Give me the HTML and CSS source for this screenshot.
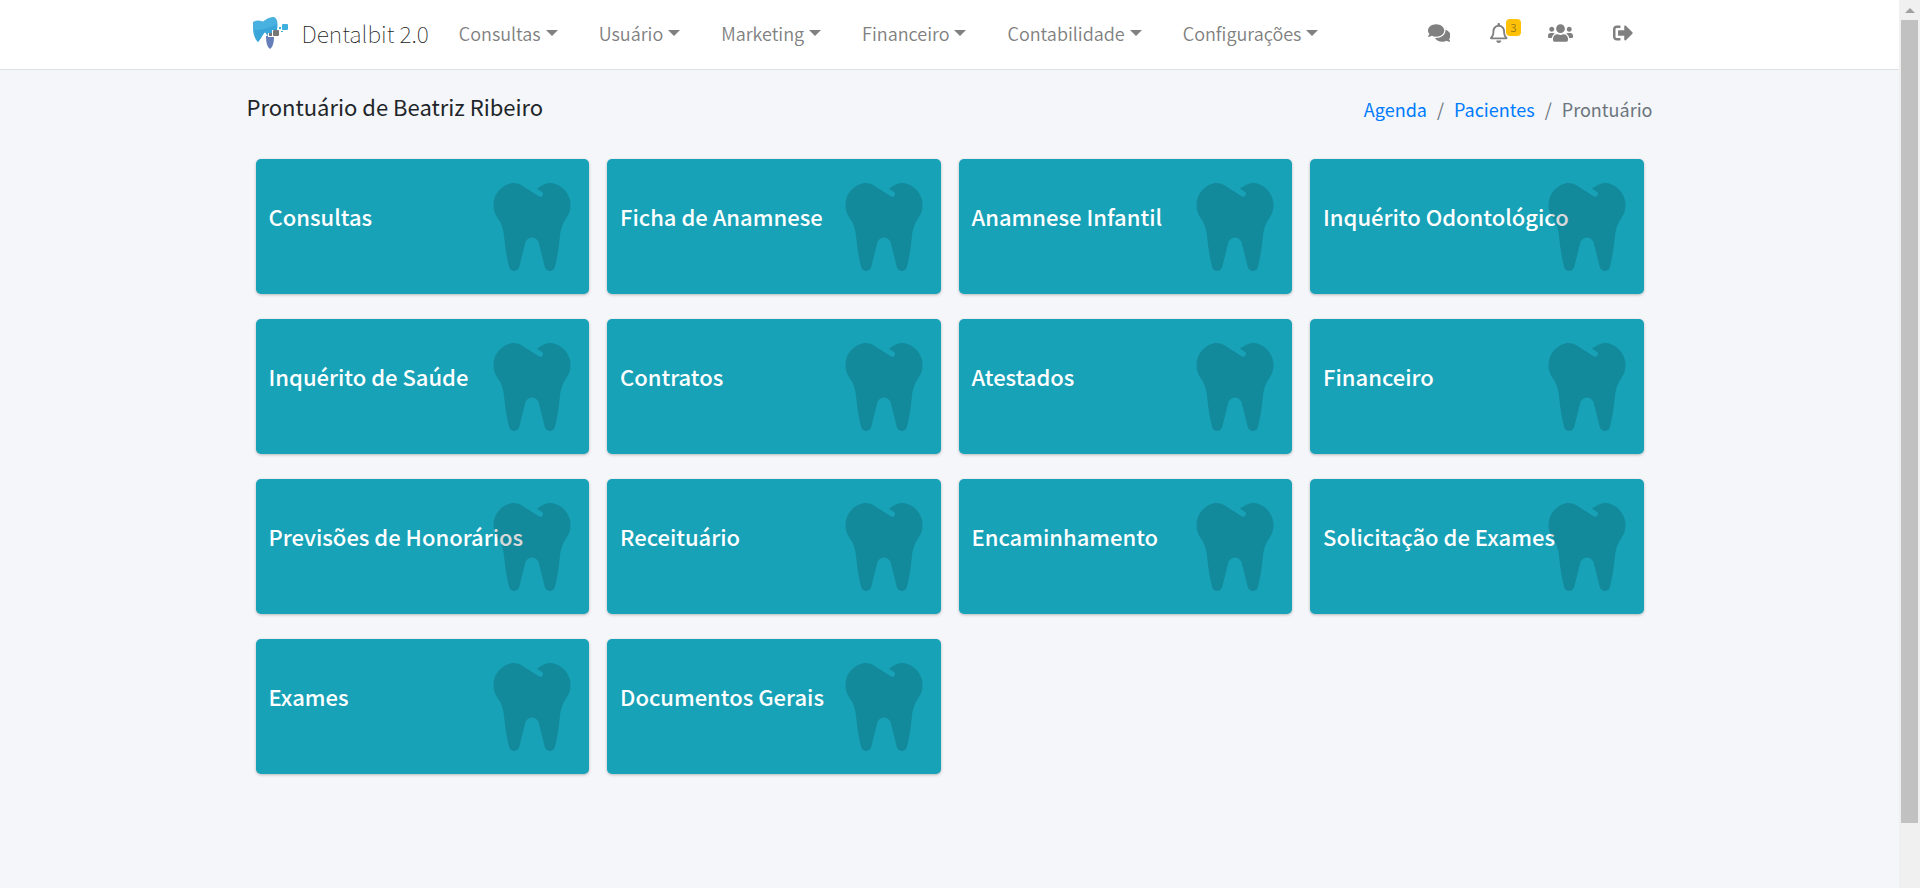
FILE: index.html
```html
<!DOCTYPE html>
<html lang="pt-BR">
<head>
<meta charset="utf-8">
<title>Dentalbit 2.0</title>
<link rel="stylesheet" href="styles.css">
</head>
<body>
<svg class="sprite" aria-hidden="true">
  <symbol id="tooth" viewBox="0 0 448 512"><path d="M443.98 96.25c-11.01-45.22-47.11-82.06-92.01-93.72-32.19-8.36-63 5.1-89.14 24.33-3.25 2.39-6.96 3.73-10.5 5.48l28.32 18.21c7.42 4.77 9.58 14.67 4.8 22.11-4.46 6.95-14.27 9.86-22.11 4.8L162.83 12.84c-20.7-10.85-43.38-16.4-66.81-10.31-44.9 11.67-81 48.5-92.01 93.72-10.13 41.62-.42 80.81 21.5 110.43 23.36 31.57 32.68 68.66 36.29 107.35 4.4 47.16 10.33 94.16 20.94 140.32l7.8 33.95c3.19 13.87 15.49 23.7 29.67 23.7 13.97 0 26.15-9.55 29.54-23.16l34.47-138.42c4.56-18.32 20.96-31.16 39.76-31.16s35.2 12.85 39.76 31.16l34.47 138.42c3.39 13.61 15.57 23.16 29.54 23.16 14.18 0 26.48-9.83 29.67-23.7l7.8-33.95c10.61-46.15 16.53-93.16 20.94-140.32 3.61-38.7 12.93-75.78 36.29-107.35 21.95-29.61 31.66-68.8 21.53-110.43z"/></symbol>
</svg>
<div class="page">
  <header class="navbar">
    <div class="container bar">
      <a class="brand" href="#">
        <svg class="logo" viewBox="0 0 36 34" aria-hidden="true">
          <path fill="#48b1df" d="M1 6C4 4 7 4 11 5.500C14 3 18 .5 22 1C26 3 26 8 25 14L20 17L16 20L13 16C10 19 9 23 6 26C3 24 1 17 1 13Z"/>
          <path fill="#3aa5d8" d="M2 14C8 14 18 12 25 8L25 14L16 20L13 16C10 19 9 23 6 26C4 23 2 18 2 14Z"/>
          <path fill="#657db9" d="M14 20L22 20C22 26 21 31 18 33C15 31 14 26 14 20Z"/>
          <path fill="#fff" d="M20 14h8v7h-8zM16 17h4v4h-4z"/>
          <rect fill="#777" x="21" y="14" width="6" height="6" rx="1"/>
          <path fill="#777" d="M17 17h3v3h-3z"/>
          <rect fill="#40b0df" x="30" y="8" width="6" height="6" rx="1"/>
          <path fill="#40b0df" d="M27 11h2v2h-2zM29 15h2v1h-2z"/>
        </svg>
        <span>Dentalbit 2.0</span>
      </a>
      <nav class="menu">
        <button class="drop">Consultas</button>
        <button class="drop">Usuário</button>
        <button class="drop">Marketing</button>
        <button class="drop">Financeiro</button>
        <button class="drop">Contabilidade</button>
        <button class="drop">Configurações</button>
      </nav>
      <nav class="tools">
        <a class="tool" href="#" aria-label="Mensagens"><svg viewBox="0 0 576 512"><path d="M416 192c0-88.4-93.1-160-208-160S0 103.6 0 192c0 34.3 14.1 65.9 38 92-13.4 30.2-35.5 54.2-35.8 54.5-2.2 2.3-2.8 5.7-1.5 8.7S4.800 352 8 352c36.600 0 66.900-12.300 88.700-25 32.200 15.700 70.300 25 111.300 25 114.900 0 208-71.600 208-160zm122 220c23.900-26 38-57.700 38-92 0-66.900-53.500-124.200-129.300-148.100.9 6.600 1.300 13.300 1.300 20.100 0 105.900-107.700 192-240 192-10.800 0-21.300-.8-31.700-1.900C207.800 439.600 281.800 480 368 480c41 0 79.100-9.200 111.300-25 21.800 12.700 52.100 25 88.700 25 3.200 0 6.100-1.900 7.300-4.800 1.300-2.900.7-6.300-1.500-8.700-.3-.3-22.400-24.200-35.800-54.500z"/></svg></a>
        <a class="tool" href="#" aria-label="Notificações"><svg viewBox="0 0 448 512"><path d="M439.390 362.290c-19.320-20.760-55.470-51.990-55.470-154.290 0-77.700-54.480-139.900-127.940-155.160V32c0-17.670-14.320-32-31.980-32s-31.980 14.330-31.980 32v20.840C118.560 68.100 64.080 130.300 64.080 208c0 102.300-36.150 133.530-55.470 154.290-6 6.450-8.660 14.160-8.610 21.710.11 16.400 12.980 32 32.100 32h383.800c19.120 0 32-15.600 32.100-32 .05-7.550-2.610-15.270-8.610-21.710zM67.530 368c21.220-27.970 44.420-74.330 44.530-159.420 0-.2-.06-.38-.06-.58 0-61.860 50.140-112 112-112s112 50.140 112 112c0 .2-.06.38-.06.58.11 85.100 23.310 131.460 44.530 159.420H67.530zM224 512c35.320 0 63.970-28.650 63.970-64H160.030c0 35.350 28.650 64 63.970 64z"/></svg><span class="badge">3</span></a>
        <a class="tool" href="#" aria-label="Usuários"><svg viewBox="0 0 640 512"><path d="M96 224c35.300 0 64-28.700 64-64s-28.700-64-64-64-64 28.700-64 64 28.700 64 64 64zm448 0c35.300 0 64-28.700 64-64s-28.700-64-64-64-64 28.700-64 64 28.700 64 64 64zm32 32h-64c-17.600 0-33.500 7.100-45.100 18.600 40.300 22.100 68.900 62 75.100 109.400h66c17.700 0 32-14.300 32-32v-32c0-35.300-28.700-64-64-64zm-256 0c61.900 0 112-50.100 112-112S381.900 32 320 32 208 82.100 208 144s50.100 112 112 112zm76.800 32h-8.300c-20.800 10-43.900 16-68.500 16s-47.600-6-68.500-16h-8.300C179.600 288 128 339.600 128 403.200V432c0 26.500 21.500 48 48 48h288c26.500 0 48-21.500 48-48v-28.800c0-63.600-51.600-115.200-115.200-115.200zm-223.700-13.400C161.500 263.100 145.600 256 128 256H64c-35.300 0-64 28.700-64 64v32c0 17.700 14.300 32 32 32h65.900c6.300-47.400 34.900-87.300 75.200-109.400z"/></svg></a>
        <a class="tool" href="#" aria-label="Sair"><svg viewBox="0 0 512 512"><path d="M497 273L329 441c-15 15-41 4.500-41-17v-96H152c-13.300 0-24-10.700-24-24v-96c0-13.300 10.700-24 24-24h136V88c0-21.400 25.900-32 41-17l168 168c9.300 9.400 9.300 24.600 0 34zM192 436v-40c0-6.600-5.400-12-12-12H96c-17.700 0-32-14.300-32-32V160c0-17.700 14.300-32 32-32h84c6.600 0 12-5.400 12-12V76c0-6.600-5.400-12-12-12H96c-53 0-96 43-96 96v192c0 53 43 96 96 96h84c6.600 0 12-5.400 12-12z"/></svg></a>
      </nav>
    </div>
  </header>
  <main class="container">
    <div class="heading">
      <h1>Prontuário de Beatriz Ribeiro</h1>
      <ol class="crumbs">
        <li><a href="#">Agenda</a></li>
        <li><a href="#">Pacientes</a></li>
        <li>Prontuário</li>
      </ol>
    </div>
    <div class="cards">
      <a class="card" href="#"><span>Consultas</span><svg><use href="#tooth"/></svg></a>
      <a class="card" href="#"><span>Ficha de Anamnese</span><svg><use href="#tooth"/></svg></a>
      <a class="card" href="#"><span>Anamnese Infantil</span><svg><use href="#tooth"/></svg></a>
      <a class="card" href="#"><span>Inquérito Odontológico</span><svg><use href="#tooth"/></svg></a>
      <a class="card" href="#"><span>Inquérito de Saúde</span><svg><use href="#tooth"/></svg></a>
      <a class="card" href="#"><span>Contratos</span><svg><use href="#tooth"/></svg></a>
      <a class="card" href="#"><span>Atestados</span><svg><use href="#tooth"/></svg></a>
      <a class="card" href="#"><span>Financeiro</span><svg><use href="#tooth"/></svg></a>
      <a class="card" href="#"><span>Previsões de Honorários</span><svg><use href="#tooth"/></svg></a>
      <a class="card" href="#"><span>Receituário</span><svg><use href="#tooth"/></svg></a>
      <a class="card" href="#"><span>Encaminhamento</span><svg><use href="#tooth"/></svg></a>
      <a class="card" href="#"><span>Solicitação de Exames</span><svg><use href="#tooth"/></svg></a>
      <a class="card" href="#"><span>Exames</span><svg><use href="#tooth"/></svg></a>
      <a class="card" href="#"><span>Documentos Gerais</span><svg><use href="#tooth"/></svg></a>
    </div>
  </main>
</div>
<div class="scrollbar" aria-hidden="true"><div class="arrow"></div><div class="thumb"></div></div>
</body>
</html>
```
FILE: styles.css
```css
* { box-sizing: border-box; }
body {
  margin: 0;
  min-height: 100vh;
  display: flex;
  background: #f4f6f9;
  color: #212529;
  font: 400 18px/30px "Noto Sans CJK JP", "Noto Sans", sans-serif;
}
a { color: #007bff; text-decoration: none; }
.sprite { position: absolute; width: 0; height: 0; }
.page { flex: 1; min-width: 0; }
.container { width: 100%; max-width: 1406px; margin: 0 auto; }
.navbar { background: #fff; border-bottom: 1px solid #dee2e6; }
.bar { display: flex; align-items: center; height: 69px; padding-bottom: 4px; }
.brand {
  display: flex;
  align-items: center;
  gap: 14px;
  margin-left: 5px;
  color: #1a1a1a;
  font-size: 23px;
  font-weight: 100;
  white-space: nowrap;
}
.logo { width: 36px; height: 34px; }
.menu { display: flex; gap: 41px; margin-left: 30px; }
.drop {
  display: flex;
  align-items: center;
  gap: 5px;
  padding: 0;
  border: 0;
  background: none;
  color: #808080;
  font: inherit;
  font-weight: 350;
}
.drop::after {
  content: "";
  border: 6px solid transparent;
  border-top-color: #808080;
  border-bottom: 0;
}
.tools { display: flex; margin-left: auto; margin-right: 20px; gap: 40px; }
.tool { position: relative; display: flex; color: #808080; }
.tool svg { height: 20px; width: auto; fill: currentColor; }
.badge {
  position: absolute;
  top: -4px;
  left: 16px;
  width: 15px;
  border-radius: 4px;
  background: #ffc107;
  color: #6c5a20;
  font-size: 11px;
  font-weight: 300;
  line-height: 17px;
  text-align: center;
}
.heading {
  display: flex;
  justify-content: space-between;
  align-items: flex-start;
  padding: 18px 0 35px;
}
h1 { margin: 0; font-size: 22px; line-height: 36px; font-weight: 400; }
.crumbs { display: flex; margin: 6px 0 0; padding: 0; list-style: none; color: #6c757d; }
.crumbs li + li::before { content: "/"; padding: 0 10px; }
.cards {
  display: grid;
  grid-template-columns: repeat(4, 1fr);
  gap: 25px 18px;
  padding: 0 9px;
}
.card {
  position: relative;
  height: 135px;
  padding: 39px 13px;
  border-radius: 5px;
  background: #17a2b8;
  box-shadow: 0 1px 3px rgba(0, 0, 0, .25);
  color: #fff;
  font-size: 22px;
  line-height: 36px;
  font-weight: 500;
  white-space: nowrap;
}
.card svg {
  position: absolute;
  top: 24px;
  right: 18px;
  width: 78px;
  height: 88px;
  fill: rgba(0, 0, 0, .15);
}
.scrollbar {
  width: 21px;
  padding: 8px 2px 65px;
  display: flex;
  flex-direction: column;
  align-items: center;
  gap: 7px;
  background: #f0f0f0;
}
.arrow { border: 5px solid transparent; border-bottom-color: #a0a0a0; border-top: 0; }
.thumb { flex: 1; width: 17px; background: #c1c1c1; }
```
